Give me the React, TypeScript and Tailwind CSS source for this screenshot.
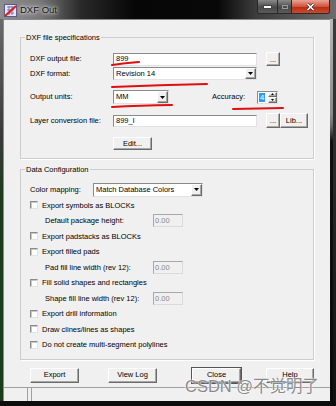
import React from "react";

const raised =
  "border border-t-white border-l-white border-r-[#6b6b6b] border-b-[#6b6b6b] shadow-[inset_-1px_-1px_0_#a8a8a8] bg-[#f0f0f0]";
const sunken =
  "border border-t-[#8a8a8a] border-l-[#8a8a8a] border-r-[#e2e2e2] border-b-[#e2e2e2] bg-white";

function Arrow() {
  return (
    <svg width="5" height="3" viewBox="0 0 5 3">
      <path d="M0 0h5L2.5 3z" fill="#000" />
    </svg>
  );
}

function Select({ value, w, h }: { value: string; w: string; h: string }) {
  return (
    <div className={`${sunken} ${w} ${h} flex items-stretch`}>
      <span className="flex-1 flex items-center pl-[2px] leading-none">{value}</span>
      <span className={`${raised} w-[11px] flex items-center justify-center`}>
        <Arrow />
      </span>
    </div>
  );
}

function Btn({ label, className }: { label: string; className: string }) {
  return (
    <div className={`${raised} ${className} flex items-center justify-center leading-none`}>
      {label}
    </div>
  );
}

function Check({ label }: { label: string }) {
  return (
    <div className="h-[15.5px] flex items-center pl-[9px]">
      <span className={`${sunken} w-[8px] h-[8px] shadow-[inset_1px_1px_0_#c8c8c8]`} />
      <span className="ml-[4px] leading-none">{label}</span>
    </div>
  );
}

function NumRow({ label }: { label: string }) {
  return (
    <div className="h-[15.5px] flex items-center pl-[24px]">
      <span className="w-[108px] leading-none">{label}</span>
      <span className="w-[30px] h-[13px] border border-[#a8a8a8] border-r-[#dadada] border-b-[#dadada] bg-[#f0f0f0] text-[#8a8a8a] flex items-center pl-[1px] leading-none">
        0.00
      </span>
    </div>
  );
}

function Row({ label, children, className }: { label: string; children: React.ReactNode; className: string }) {
  return (
    <div className={`flex items-center pl-[9px] ${className}`}>
      <span className="w-[83px] leading-none">{label}</span>
      {children}
    </div>
  );
}

export default function App() {
  return (
    <div className="relative w-[336px] h-[406px] bg-black flex flex-col overflow-hidden font-['Liberation_Sans',Arial,sans-serif] text-[7.5px] text-black">
      {/* title bar */}
      <div className="h-[19px] flex items-start bg-[linear-gradient(to_right,#8e8e8e_0%,#777_12%,#2a2a2a_24%,#060606_40%,#080808_65%,#3c3c3c_76%,#6c6c6c_100%)]">
        <svg width="13" height="13" viewBox="0 0 13 13" className="ml-[4px] mt-[4px]">
          <rect x="0.5" y="0.5" width="12" height="12" fill="#e8e6f4" stroke="#5b5a8c" />
          <path d="M3 3h7M3 6h7M3 9h7M5 2v9M8 2v9" stroke="#5d62b0" strokeWidth="0.8" />
          <path d="M1 12L12 2" stroke="#e21a1a" strokeWidth="2" />
        </svg>
        <span className="ml-[3px] mt-[5px] text-[9.5px] leading-none text-[#111] [text-shadow:0_0_6px_#fff,0_0_3px_#fff]">
          DXF Out
        </span>
        <div className="ml-auto mr-[6px] flex h-[14px] rounded-b-[3px] border border-t-0 border-[#2a2a2a] overflow-hidden">
          <div className="w-[20px] flex items-end justify-center pb-[4px] bg-[linear-gradient(#8a8a8a,#4a4a4a_55%,#5a5a5a)] border-r border-[#2a2a2a]">
            <span className="w-[7px] h-[2px] bg-white border border-[#444] box-content" />
          </div>
          <div className="w-[14px] flex items-center justify-center bg-[linear-gradient(#8a8a8a,#4a4a4a_55%,#5a5a5a)] border-r border-[#2a2a2a]">
            <span className="w-[6px] h-[4px] border border-[#9a9a9a]" />
          </div>
          <div className="w-[37px] flex items-center justify-center bg-[linear-gradient(#e7a596,#d0553c_50%,#b72f17_55%,#cc4a2c)]">
            <svg width="9" height="8" viewBox="0 0 9 8">
              <path d="M1.5 1l6 6M7.5 1l-6 6" stroke="#3a2a2a" strokeWidth="3" />
              <path d="M1.5 1l6 6M7.5 1l-6 6" stroke="#fff" strokeWidth="1.6" />
            </svg>
          </div>
        </div>
      </div>

      <div className="flex flex-1">
        <div className="w-[4px] bg-[linear-gradient(#6a6a6a,#3a3a3a_30%,#1f3a1f_45%,#1c3d1c_100%)]" />
        <div className="flex-1 bg-[#f0f0f0] flex flex-col px-[16px] border-t border-l border-[#8a8a8a]">
          <fieldset className="mt-[13px] border border-[#cdcdcd] shadow-[1px_1px_0_#fff] pb-[8px]">
            <legend className="ml-[4px] px-[1px] leading-[9px]">DXF file specifications</legend>
            <Row label="DXF output file:" className="mt-[10px] h-[14px]">
              <div className={`${sunken} w-[144px] h-[13px] flex items-center pl-[2px] leading-none`}>899</div>
              <Btn label="..." className="ml-[9px] w-[14px] h-[14px] items-end pb-[2px]" />
            </Row>
            <Row label="DXF format:" className="mt-[1px] h-[13px]">
              <Select value="Revision 14" w="w-[144px]" h="h-[13px]" />
            </Row>
            <Row label="Output units:" className="mt-[10px] h-[14px]">
              <Select value="MM" w="w-[56px]" h="h-[14px]" />
              <span className="w-[76px] text-right leading-none">Accuracy:</span>
              <div className={`${sunken} ml-[12px] w-[21px] h-[13px] flex items-stretch`}>
                <span className="flex-1 flex items-center pl-[1px]">
                  <span className="bg-[#3399ff] text-white px-[1px] leading-[9px]">4</span>
                </span>
                <span className="w-[9px] flex flex-col">
                  <span className={`${raised} flex-1 flex items-center justify-center`}>
                    <svg width="3" height="2" viewBox="0 0 3 2"><path d="M0 2h3L1.5 0z" fill="#000" /></svg>
                  </span>
                  <span className={`${raised} flex-1 flex items-center justify-center`}>
                    <svg width="3" height="2" viewBox="0 0 3 2"><path d="M0 0h3L1.5 2z" fill="#000" /></svg>
                  </span>
                </span>
              </div>
            </Row>
            <Row label="Layer conversion file:" className="mt-[9px] h-[15px]">
              <div className={`${sunken} w-[144px] h-[12px] flex items-center pl-[2px] leading-none`}>899_l</div>
              <Btn label="..." className="ml-[9px] w-[14px] h-[15px] items-end pb-[3px]" />
              <Btn label="Lib..." className="w-[28px] h-[15px]" />
            </Row>
            <div className="mt-[9px] h-[13px] flex pl-[92px]">
              <Btn label="Edit..." className="w-[39px] h-[13px]" />
            </div>
          </fieldset>

          <fieldset className="mt-[6px] border border-[#cdcdcd] shadow-[1px_1px_0_#fff] pb-[6px]">
            <legend className="ml-[4px] px-[1px] leading-[9px]">Data Configuration</legend>
            <div className="mt-[8px] h-[15.5px] flex items-center pl-[9px]">
              <span className="w-[63px] leading-none">Color mapping:</span>
              <Select value="Match Database Colors" w="w-[110px]" h="h-[14px]" />
            </div>
            <Check label="Export symbols as BLOCKs" />
            <NumRow label="Default package height:" />
            <Check label="Export padstacks as BLOCKs" />
            <Check label="Export filled pads" />
            <NumRow label="Pad fill line width (rev 12):" />
            <Check label="Fill solid shapes and rectangles" />
            <NumRow label="Shape fill line width (rev 12):" />
            <Check label="Export drill information" />
            <Check label="Draw clines/lines as shapes" />
            <Check label="Do not create multi-segment polylines" />
          </fieldset>

          <div className="mt-[8px] h-[15px] flex pl-[10px]">
            <Btn label="Export" className="w-[49px] h-[15px]" />
            <Btn label="View Log" className="ml-[29px] w-[49px] h-[15px]" />
            <Btn label="Close" className="ml-[35px] w-[49px] h-[15px] outline outline-1 outline-[#555]" />
            <Btn label="Help" className="ml-[25px] w-[48px] h-[15px]" />
          </div>

          <div className="mt-auto -mx-[16px] h-[14px] flex border-t border-[#a0a0a0]">
            <div className="w-[24px] border-r border-[#a0a0a0]" />
            <div className="flex-1 ml-[3px] border-l border-[#a0a0a0]" />
          </div>
        </div>
        <div className="w-[6px] flex">
          <div className="w-[3px] bg-[linear-gradient(#b8b8b8,#8a8a8a_25%,#6a6a6a_28%,#101010_32%,#0a0a0a)]" />
          <div className="w-[3px] bg-[linear-gradient(#3a3a3a,#111)]" />
        </div>
      </div>
      <div className="h-[5px] bg-[#0d0d0d]" />

      {/* red annotation marks */}
      <svg className="absolute inset-0 pointer-events-none" width="336" height="406" viewBox="0 0 336 406">
        <g stroke="#e00f0f" strokeWidth="2" fill="none" strokeLinecap="round">
          <path d="M112 65 Q125 63 139 62" />
          <path d="M112 87 Q160 85 207 84" />
          <path d="M112 107 Q140 105.5 172 105" />
          <path d="M233 109 Q258 108.5 283 108" />
        </g>
      </svg>

      <span className="absolute left-[185px] top-[378px] text-[16.5px] leading-none text-[#8a8a8a] font-['Liberation_Sans','Noto_Sans_CJK_SC',sans-serif] [text-shadow:0_0_1px_#fff,0_0_2px_#fff]">
        CSDN @不觉明了
      </span>
    </div>
  );
}
